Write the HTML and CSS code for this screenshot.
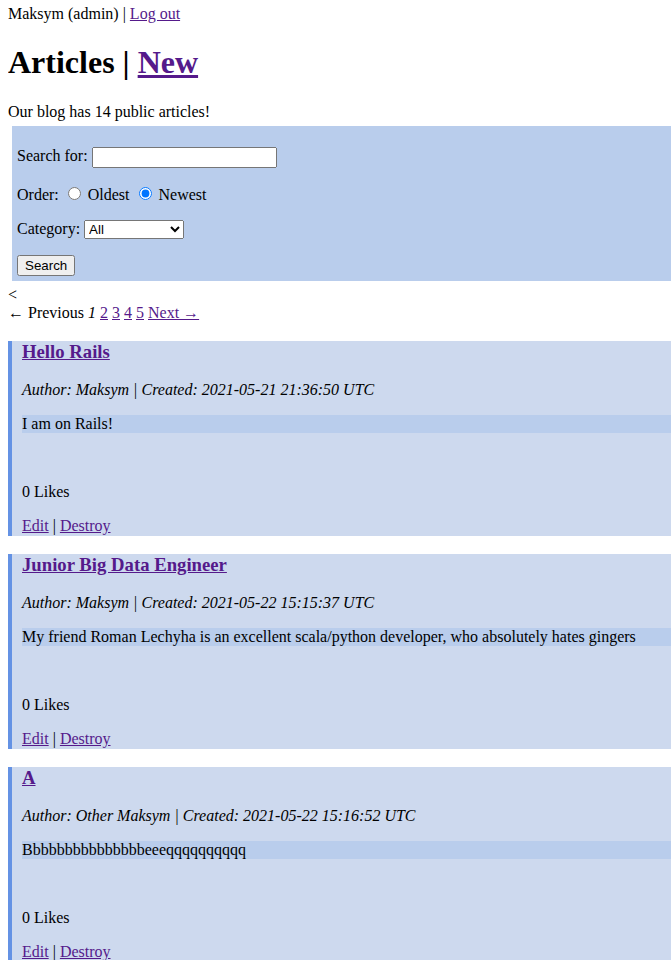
FILE: index.html
```html
<!DOCTYPE html>
<html>
<head>
<meta charset="utf-8">
<title>Articles</title>
<link rel="stylesheet" href="styles.css">
</head>
<body>
<div class="userbar">Maksym (admin) | <a href="#">Log out</a></div>
<h1 class="title">Articles | <a href="#">New</a></h1>
<p class="count">Our blog has 14 public articles!</p>
<form class="search">
  <p class="row"><label for="q">Search for:</label> <input type="text" id="q" class="query"></p>
  <p class="row">Order: <input type="radio" name="order" id="o1"> <label for="o1">Oldest</label> <input type="radio" name="order" id="o2" checked> <label for="o2">Newest</label></p>
  <p class="row"><label for="cat">Category:</label> <select id="cat" class="category"><option>All</option><option>Technology</option></select></p>
  <p class="row row-last"><button type="button" class="btn">Search</button></p>
</form>
<div class="stray">&lt;</div>
<div class="pagination"><span class="disabled">&larr; Previous</span> <em class="current">1</em> <a href="#">2</a> <a href="#">3</a> <a href="#">4</a> <a href="#">5</a> <a href="#" class="next">Next &rarr;</a></div>

<div class="article">
  <h3 class="a-title"><a href="#">Hello Rails</a></h3>
  <p class="meta">Author: Maksym | Created: 2021-05-21 21:36:50 UTC</p>
  <div class="body">I am on Rails!</div>
  <p class="likes">0 Likes</p>
  <p class="actions"><a href="#">Edit</a> | <a href="#">Destroy</a></p>
</div>

<div class="article">
  <h3 class="a-title"><a href="#">Junior Big Data Engineer</a></h3>
  <p class="meta">Author: Maksym | Created: 2021-05-22 15:15:37 UTC</p>
  <div class="body">My friend Roman Lechyha is an excellent scala/python developer, who absolutely hates gingers</div>
  <p class="likes">0 Likes</p>
  <p class="actions"><a href="#">Edit</a> | <a href="#">Destroy</a></p>
</div>

<div class="article">
  <h3 class="a-title"><a href="#">A</a></h3>
  <p class="meta">Author: Other Maksym | Created: 2021-05-22 15:16:52 UTC</p>
  <div class="body">Bbbbbbbbbbbbbbbeeeqqqqqqqqqq</div>
  <p class="likes">0 Likes</p>
  <p class="actions"><a href="#">Edit</a> | <a href="#">Destroy</a></p>
</div>
</body>
</html>
```

FILE: styles.css
```css
html {
  overflow-x: hidden;
}
body {
  margin: 5px 0 8px 8px;
  font-family: "Liberation Serif", "Times New Roman", serif;
  font-size: 16px;
  color: #000;
  background: #fff;
}
a {
  color: #551a8b;
  text-decoration: underline;
}
.userbar {
  line-height: normal;
}
.title {
  font-size: 32px;
  font-weight: bold;
  margin: 21.44px 0;
}
.count {
  margin: 0 0 5px;
}
.search {
  margin: 0 0 0 4px;
  padding: 5px;
  background: #b9cdec;
}
.row {
  margin: 16px 0;
}
.row-last {
  margin-bottom: 0;
}
.query {
  width: 185px;
  height: 21px;
  box-sizing: border-box;
  vertical-align: middle;
  margin: 0;
}
.category {
  width: 100px;
  margin: 0;
}
.btn {
  margin: 0;
}
.stray {
  margin-top: 5px;
}
.pagination {
  margin-bottom: 19px;
}
.article {
  background: #cdd9ee;
  border-left: 4px solid #6492e4;
  padding: 0 0 1px 10px;
  margin: 0 0 18px;
  line-height: 18px;
}
.a-title {
  font-size: 18.72px;
  line-height: 21px;
  margin: 0 0 19px;
}
.meta {
  font-style: italic;
  margin: 16px 0;
}
.body {
  background: #b9cdec;
}
.likes {
  margin: 50px 0 16px;
}
.actions {
  margin: 0;
}
```
